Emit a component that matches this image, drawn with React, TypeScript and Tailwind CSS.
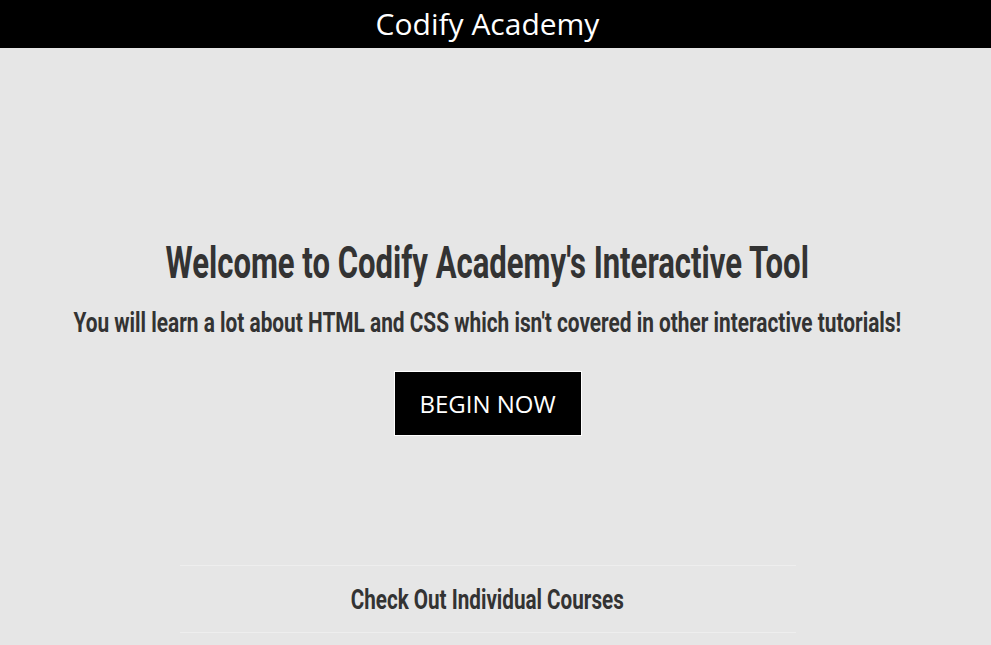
export default function App() {
  return (
    <div className="min-h-[645px] bg-[#e6e6e6] flex flex-col">
      <header className="h-12 bg-black flex items-center justify-center pr-4">
        <span className="text-white text-[30px] leading-none font-['Open_Sans',sans-serif]">Codify Academy</span>
      </header>
      <main className="flex flex-col items-center pt-[192px] pr-4">
        <h1 className="h-[45px] flex items-center justify-center whitespace-nowrap text-[#333] text-[45px] leading-none font-bold font-['Roboto',sans-serif] scale-x-[0.69]">Welcome to Codify Academy's Interactive Tool</h1>
        <p className="mt-[24px] h-[28px] flex items-center justify-center whitespace-nowrap text-[#333] text-[28px] leading-none font-bold font-['Roboto',sans-serif] scale-x-[0.744]">You will learn a lot about HTML and CSS which isn't covered in other interactive tutorials!</p>
        <button className="mt-[34px] w-[188px] h-[65px] bg-black border border-white text-white text-[24px] font-['Open_Sans',sans-serif]">BEGIN NOW</button>
        <div className="mt-[129px] w-[616px] border-t border-b border-[#eeeeee] h-[68px] flex items-center justify-center">
          <h2 className="pt-[2px] whitespace-nowrap text-[#333] text-[28px] leading-none font-bold font-['Roboto',sans-serif] scale-x-[0.737]">Check Out Individual Courses</h2>
        </div>
      </main>
    </div>
  );
}
